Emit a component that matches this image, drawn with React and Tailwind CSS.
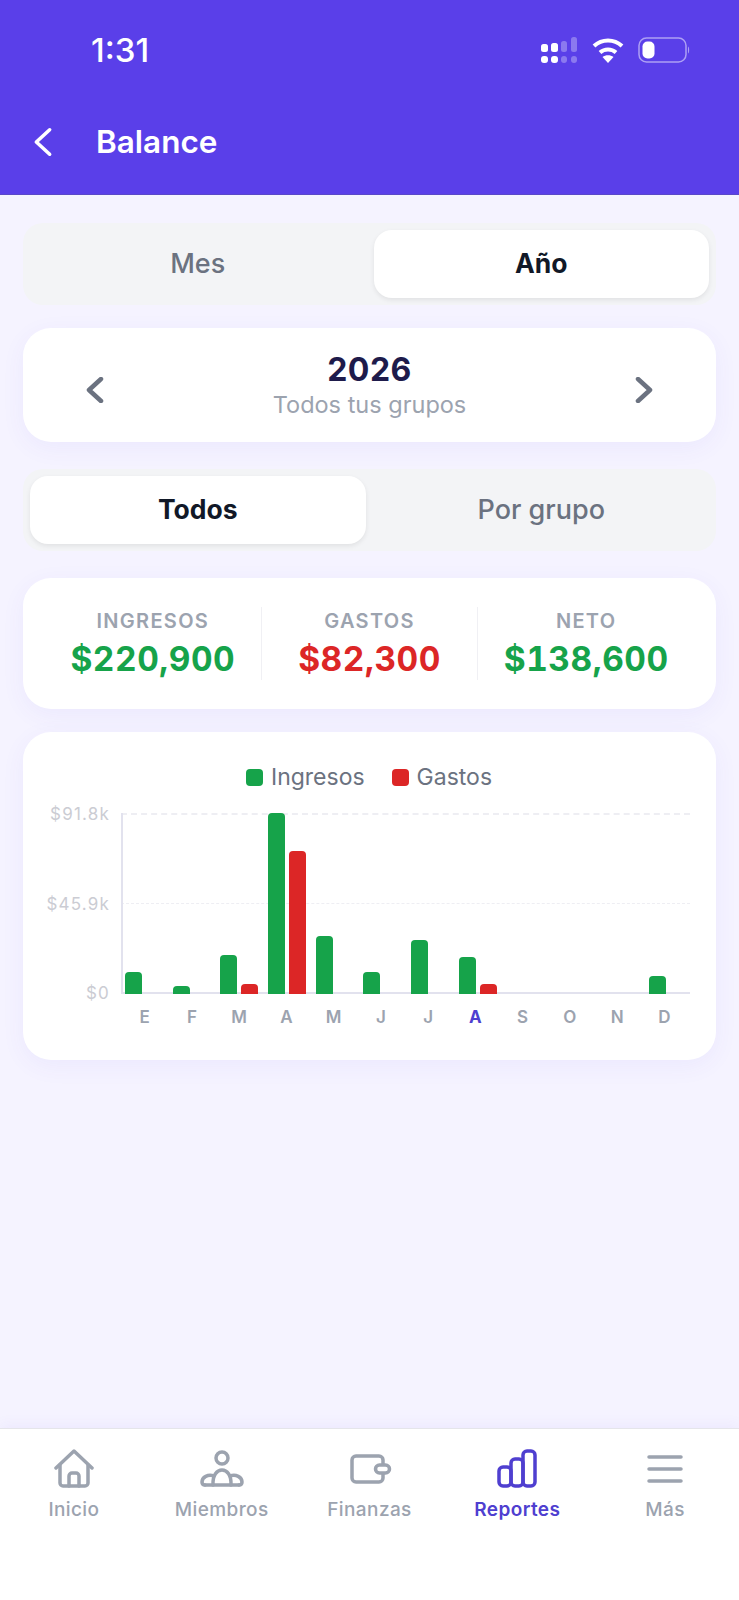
const months = [
  { label: 'E', income: 22 },
  { label: 'F', income: 8 },
  { label: 'M', income: 39, expense: 10 },
  { label: 'A', income: 181, expense: 143 },
  { label: 'M', income: 58 },
  { label: 'J', income: 22 },
  { label: 'J', income: 54 },
  { label: 'A', income: 37, expense: 10, current: true },
  { label: 'S' },
  { label: 'O' },
  { label: 'N' },
  { label: 'D', income: 18 },
]

const Chevron = ({ dir, size = 18, height = 26, width = 4.5, className }) => (
  <svg width={size} height={height} viewBox="0 0 18 26" fill="none" stroke="currentColor" strokeWidth={width} strokeLinecap="round" strokeLinejoin="round" className={className}>
    <path d={dir === 'left' ? 'M15 2L3 13l12 11' : 'M3 2l12 11L3 24'} />
  </svg>
)

function StatusBar() {
  return (
    <div className="flex items-center justify-between h-[98px] pl-[91px] pr-[48px] pt-[2px] text-white">
      <span className="text-[33px] font-medium leading-none">1:31</span>
      <div className="flex items-center gap-[14px]">
        {/* Signal */}
        <svg width="38" height="26" viewBox="0 0 38 26" fill="#fff">
          <rect x="1" y="7" width="7" height="8" rx="2.500" />
          <rect x="11" y="6" width="7" height="9" rx="2.500" />
          <rect x="21" y="4" width="6" height="11" rx="2.500" opacity=".3" />
          <rect x="31" y="0" width="6" height="15" rx="2.500" opacity=".3" />
          <rect x="1" y="19" width="7" height="7" rx="3" />
          <rect x="11" y="19" width="7" height="7" rx="3" />
          <rect x="21" y="19" width="6" height="7" rx="3" opacity=".3" />
          <rect x="31" y="19" width="6" height="7" rx="3" opacity=".3" />
        </svg>
        {/* Wifi */}
        <svg width="32" height="26" viewBox="0 0 32 26" fill="none" stroke="#fff" strokeWidth="4">
          <path d="M2 9c8-7.500 20-7.500 28 0" />
          <path d="M8 15.500c4.500-4 11.500-4 16 0" />
          <path d="M16 26l-5.500-6c3-2.500 8-2.500 11 0z" fill="#fff" stroke="none" />
        </svg>
        {/* Battery */}
        <svg width="53" height="26" viewBox="0 0 53 26" fill="none">
          <rect x="1" y="1" width="47" height="24" rx="7.500" stroke="#fff" strokeOpacity=".5" strokeWidth="1.500" />
          <rect x="4.500" y="4.500" width="12" height="17" rx="5" fill="#fff" />
          <path d="M50 9.500c1.500.6 1.500 6.400 0 7z" fill="#fff" fillOpacity=".5" />
        </svg>
      </div>
    </div>
  )
}

function Header() {
  return (
    <header className="bg-[#5a3fe9] h-[195px] border-b border-[#5a48c8]">
      <StatusBar />
      <div className="flex items-center h-[46px] pl-[33px] mt-[21px]">
        <Chevron dir="left" size={20} height={32} width={3.2} className="text-white" />
        <span className="ml-[43px] text-[31.500px] font-semibold text-white">Balance</span>
      </div>
    </header>
  )
}

function Segmented({ options, active }) {
  return (
    <div className="flex gap-[8px] bg-[#f3f4f6] rounded-[20px] p-[7px]">
      {options.map(option => (
        <div
          key={option}
          className={
            option === active
              ? 'flex-1 h-[68px] flex items-center justify-center rounded-[18px] bg-white shadow-[0_2px_5px_rgba(0,0,0,0.08)] text-[26.500px] font-bold text-[#111827]'
              : 'flex-1 h-[68px] flex items-center justify-center text-[27px] font-medium text-[#6b7280]'
          }
        >
          {option}
        </div>
      ))}
    </div>
  )
}

function Card({ className, children }) {
  return (
    <div className={`bg-white rounded-[28px] shadow-[0_6px_24px_rgba(91,63,234,0.06)] ${className}`}>
      {children}
    </div>
  )
}

function DateCard() {
  return (
    <Card className="h-[114px] flex items-center justify-between px-[63px]">
      <Chevron dir="left" className="text-[#6b7280] mt-[9px]" />
      <div className="text-center -mt-[1px]">
        <div className="text-[32px] leading-[40px] font-bold tracking-[0.5px] text-[#1e1b4b]">2026</div>
        <div className="text-[23.500px] leading-[30px] text-[#9ca3af]">Todos tus grupos</div>
      </div>
      <Chevron dir="right" className="text-[#6b7280] mt-[9px]" />
    </Card>
  )
}

function Stat({ label, value, color, divider }) {
  return (
    <div className={`flex-1 text-center h-[73px] ${divider ? 'border-l border-[#f0f0f4]' : ''}`}>
      <div className="text-[20px] leading-[26px] mt-[1px] font-semibold tracking-[1.300px] text-[#9ca3af]">{label}</div>
      <div className={`text-[33.500px] leading-[46px] mt-[2px] font-bold tracking-[0.5px] tabular-nums ${color}`}>{value}</div>
    </div>
  )
}

function SummaryCard() {
  return (
    <Card className="h-[131px] flex items-center px-[22px]">
      <Stat label="INGRESOS" value="$220,900" color="text-[#16a34a]" />
      <Stat label="GASTOS" value="$82,300" color="text-[#dc2626]" divider />
      <Stat label="NETO" value="$138,600" color="text-[#16a34a]" divider />
    </Card>
  )
}

function LegendItem({ color, label }) {
  return (
    <div className="flex items-center gap-[8px]">
      <span className={`w-[17px] h-[17px] rounded-[4px] ${color}`} />
      <span className="text-[23px] leading-none text-[#6b7280]">{label}</span>
    </div>
  )
}

function Chart() {
  return (
    <Card className="h-[328px] pt-[32px] pl-[22px] pr-[26px]">
      <div className="flex justify-center gap-[27px] h-[26px] items-center pl-[3px]">
        <LegendItem color="bg-[#16a34a]" label="Ingresos" />
        <LegendItem color="bg-[#dc2626]" label="Gastos" />
      </div>
      <div className="flex mt-[23px]">
        {/* Y axis labels */}
        <div className="w-[65px] h-[182px] flex flex-col justify-between items-end text-[17px] tracking-[1.200px] text-[#cbccd3] leading-none">
          <span className="-mt-[7px]">$91.8k</span>
          <span>$45.9k</span>
          <span className="-mb-[7px]">$0</span>
        </div>
        <div className="flex-1 ml-[11px]">
          <div className="relative h-[181px]">
            <div className="absolute left-0 right-0 top-0 border-t-2 border-dashed border-[#eeeef3]" />
            <div className="absolute left-0 right-0 top-[90px] border-t border-dashed border-[#eeeef3]" />
            <div className="absolute left-0 top-0 bottom-0 w-[2px] bg-[#e2e2ee]" />
            <div className="absolute left-0 right-0 bottom-0 h-[2px] bg-[#e2e2ee]" />
            <div className="relative flex h-full -ml-[1px] -mr-[2px]">
              {months.map((m, i) => (
                <div key={i} className="flex-1 flex items-end justify-center gap-[4px]">
                  <div
                    className="w-[17px] bg-[#16a34a] rounded-t-[4px]"
                    style={{ height: m.income || 0 }}
                  />
                  <div
                    className="w-[17px] bg-[#dc2626] rounded-t-[4px]"
                    style={{ height: m.expense || 0 }}
                  />
                </div>
              ))}
            </div>
          </div>
          <div className="flex mt-[13px] mr-[2px]">
            {months.map((m, i) => (
              <div
                key={i}
                className={
                  m.current
                    ? 'flex-1 text-center text-[17px] leading-[20px] font-bold text-[#4f3fd0]'
                    : 'flex-1 text-center text-[17px] leading-[20px] font-semibold text-[#9ca3af]'
                }
              >
                {m.label}
              </div>
            ))}
          </div>
        </div>
      </div>
    </Card>
  )
}

const HomeIcon = () => (
  <svg width="40" height="40" viewBox="0 0 40 40" fill="none" stroke="currentColor" strokeWidth="3.500" strokeLinecap="round" strokeLinejoin="round">
    <path d="M2 19L20 2l18 17" />
    <path d="M6 16v18a3 3 0 0 0 3 3h22a3 3 0 0 0 3-3V16" />
    <path d="M15 37V27a3 3 0 0 1 3-3h4a3 3 0 0 1 3 3v10" />
  </svg>
)

const MembersIcon = () => (
  <svg width="44" height="40" viewBox="0 0 44 40" fill="none" stroke="currentColor" strokeWidth="3.500" strokeLinecap="round" strokeLinejoin="round">
    <circle cx="22" cy="9" r="6" />
    <path d="M5 36h34" />
    <path d="M13 36c-.5-10 4-15 9-15s9.500 5 9 15" />
    <path d="M14 27c-6-2-12 1-12 6 0 2 1 3 3 3" />
    <path d="M30 27c6-2 12 1 12 6 0 2-1 3-3 3" />
  </svg>
)

const WalletIcon = () => (
  <svg width="42" height="30" viewBox="0 0 42 30" fill="none" stroke="currentColor" strokeWidth="3.500" strokeLinecap="round" strokeLinejoin="round" className="ml-[3px]">
    <path d="M33 10V6a4 4 0 0 0-4-4H6a4 4 0 0 0-4 4v18a4 4 0 0 0 4 4h23a4 4 0 0 0 4-4v-4" />
    <rect x="25.500" y="11" width="14" height="8" rx="4" />
  </svg>
)

const ReportsIcon = () => (
  <svg width="40" height="40" viewBox="0 0 40 40" fill="none" stroke="currentColor" strokeWidth="3.500" strokeLinecap="round" strokeLinejoin="round">
    <rect x="2" y="18" width="12" height="19" rx="4" />
    <rect x="14" y="10" width="12" height="27" rx="4" />
    <rect x="26" y="2" width="12" height="35" rx="4" />
  </svg>
)

const MenuIcon = () => (
  <svg width="40" height="40" viewBox="0 0 40 40" fill="none" stroke="currentColor" strokeWidth="3.500" strokeLinecap="round">
    <path d="M4 8h32M4 20h32M4 32h32" />
  </svg>
)

function BottomNav() {
  const items = [
    { label: 'Inicio', icon: <HomeIcon /> },
    { label: 'Miembros', icon: <MembersIcon /> },
    { label: 'Finanzas', icon: <WalletIcon /> },
    { label: 'Reportes', icon: <ReportsIcon />, active: true },
    { label: 'Más', icon: <MenuIcon /> },
  ]
  return (
    <nav className="h-[172px] bg-white border-t border-[#e5e5ea] shadow-[0_-4px_12px_rgba(91,63,234,0.05)] flex pt-[20px]">
      {items.map(item => (
        <div
          key={item.label}
          className={`flex-1 flex flex-col items-center ${item.active ? 'text-[#4f3fd0]' : 'text-[#9ca3af]'}`}
        >
          <div className="h-[40px] flex items-center">{item.icon}</div>
          <span className={`mt-[9px] text-[19px] leading-[24px] tracking-[0.4px] ${item.active ? 'font-semibold' : 'font-medium'}`}>
            {item.label}
          </span>
        </div>
      ))}
    </nav>
  )
}

export default function App() {
  return (
    <div className="h-[1600px] w-[739px] flex flex-col bg-[#f5f3ff] font-['Inter',sans-serif]">
      <Header />
      <main className="flex-1 px-[23px] pt-[28px] flex flex-col">
        <Segmented options={['Mes', 'Año']} active="Año" />
        <div className="mt-[23px]"><DateCard /></div>
        <div className="mt-[27px]"><Segmented options={['Todos', 'Por grupo']} active="Todos" /></div>
        <div className="mt-[27px]"><SummaryCard /></div>
        <div className="mt-[23px]"><Chart /></div>
      </main>
      <BottomNav />
    </div>
  )
}
